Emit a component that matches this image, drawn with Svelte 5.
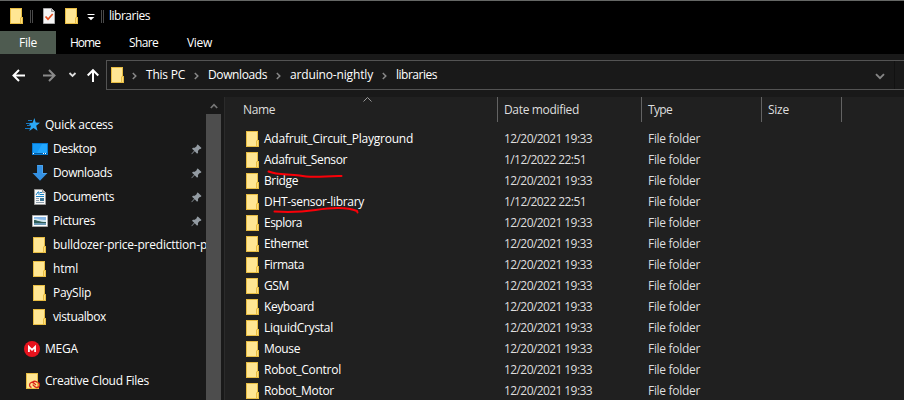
<script>
  // Tightens or loosens the tracking of a label so that it fills the given width.
  function fit(node, width) {
    const natural = node.getBoundingClientRect().width;
    node.style.letterSpacing = `${(width - natural) / node.textContent.length}px`;
  }

  const tabs = [
    { label: 'File', w: 18, active: true },
    { label: 'Home', w: 30 },
    { label: 'Share', w: 29 },
    { label: 'View', w: 25 }
  ];
  const crumbs = [
    { label: 'This PC', w: 39 },
    { label: 'Downloads', w: 59 },
    { label: 'arduino-nightly', w: 83 },
    { label: 'libraries', w: 41 }
  ];
  const places = [
    { label: 'Desktop', icon: 'desktop', w: 43, pin: true },
    { label: 'Downloads', icon: 'download', w: 59, pin: true },
    { label: 'Documents', icon: 'document', w: 61, pin: true },
    { label: 'Pictures', icon: 'picture', w: 42, pin: true },
    { label: 'bulldozer-price-predicttion-p', icon: 'folder', w: 154 },
    { label: 'html', icon: 'folder', w: 25 },
    { label: 'PaySlip', icon: 'folder', w: 38 },
    { label: 'vistualbox', icon: 'folder', w: 53 }
  ];
  const old = '12/20/2021 19:33';
  const recent = '1/12/2022 22:51';
  const files = [
    { name: 'Adafruit_Circuit_Playground', w: 149, date: old },
    { name: 'Adafruit_Sensor', w: 83, date: recent },
    { name: 'Bridge', w: 34, date: old },
    { name: 'DHT-sensor-library', w: 100, date: recent },
    { name: 'Esplora', w: 38, date: old },
    { name: 'Ethernet', w: 44, date: old },
    { name: 'Firmata', w: 40, date: old },
    { name: 'GSM', w: 25, date: old },
    { name: 'Keyboard', w: 50, date: old },
    { name: 'LiquidCrystal', w: 69, date: old },
    { name: 'Mouse', w: 36, date: old },
    { name: 'Robot_Control', w: 77, date: old },
    { name: 'Robot_Motor', w: 70, date: old }
  ];
</script>

{#snippet folder()}
  <svg class="icon" width="16" height="16" viewBox="0 0 16 16">
    <path d="M1 0h12v9h1v7H1z" fill="#e8bd43" />
    <path d="M2 1h10v8l-1 1v5H2z" fill="#ffe693" />
    <path d="M12 10h1v5h-1z" fill="#ffdf7c" />
  </svg>
{/snippet}

{#snippet placeIcon(kind)}
  {#if kind === 'folder'}
    {@render folder()}
  {:else if kind === 'desktop'}
    <svg class="icon" width="16" height="16" viewBox="0 0 16 16">
      <path d="M0 2h16v12H0z" fill="#0879d0" />
      <path d="M1 3h14v9H1z" fill="#1599f5" />
      <path d="M10 3h5v9H5z" fill="#23a8ff" />
      <path d="M1 12h14v1H1z" fill="#075a9c" />
      <path d="M1 12h1v1H1zM11 12h1v1h-1zM13 12h1v1h-1z" fill="#fff" />
    </svg>
  {:else if kind === 'download'}
    <svg class="icon" width="16" height="16" viewBox="0 0 16 16">
      <path d="M5 0h6v8h4.5L8 15.8.5 8H5z" fill="#3491e3" />
      <path d="M5.5.5h5v8h4" fill="none" stroke="#4aa3ed" />
    </svg>
  {:else if kind === 'document'}
    <svg class="icon" width="16" height="16" viewBox="0 0 16 16">
      <path d="M2.5.5h8l3 3v12h-11z" fill="#f7f8f8" stroke="#999" />
      <path d="M10.5.5v3h3" fill="#ccc" stroke="#999" />
      <path d="m4 6 2-3h1v3M8 3.5h2M8 5.5h4M4 7.5h8" fill="none" stroke="#1680c3" />
      <path d="M4 9.5h3M4 11.5h3M4 13.5h8" stroke="#8d9caa" />
      <path d="M8 9h4v3H8z" fill="#3d7594" />
    </svg>
  {:else if kind === 'picture'}
    <svg class="icon" width="16" height="16" viewBox="0 0 16 16">
      <path d="M.5 2.5h15v11H.5z" fill="#fff" stroke="#aaa" />
      <path d="M2 4h12v8H2z" fill="#88b8e8" />
      <path d="M2 6c4-1 5 1 12 1v2H2z" fill="#d4e8ef" />
      <path d="M2 7c3 0 5 2 12 2v1H2z" fill="#315e57" />
      <path d="M2 10h12v2H2z" fill="#6a98b3" />
    </svg>
  {/if}
{/snippet}

<div class="window">
  <header class="titlebar">
    {@render folder()}
    <span class="divider"></span>
    <svg class="check" width="12" height="16" viewBox="0 0 12 16">
      <path d="M.5.5h8l3 3v12H.5z" fill="#f5f5f5" stroke="#aaa" />
      <path d="M8.5.5v3h3" fill="#ccc" stroke="#999" />
      <path d="m2.5 8.5 2.5 2.7L9.7 6" fill="none" stroke="#e64d1d" stroke-width="1.7" />
    </svg>
    <span class="new">{@render folder()}</span>
    <svg class="custom" width="8" height="8" viewBox="0 0 8 8">
      <path d="M.5 1.5h7" stroke="#fff" />
      <path d="M.7 4h6.6L4 7.2z" fill="#fff" />
    </svg>
    <span class="divider second"></span>
    <span class="title"><span use:fit={41}>libraries</span></span>
  </header>

  <nav class="tabs">
    {#each tabs as tab, i}
      <div class="tab t{i}" class:active={tab.active}><span use:fit={tab.w}>{tab.label}</span></div>
    {/each}
  </nav>

  <div class="navbar">
    <svg class="arrows" width="106" height="43" viewBox="0 0 106 43" fill="none">
      <path d="M25 21.5H14M19 16l-5.5 5.5L19 27" stroke="#fff" stroke-width="2" />
      <path d="M43 21.5h11M49 16l5.5 5.5L49 27" stroke="#8a8a8a" stroke-width="2" />
      <path d="m69.5 19 3 3 3-3" stroke="#ddd" stroke-width="1.8" />
      <path d="M93 28V16.5M87.7 21.5l5.3-5.3 5.3 5.3" stroke="#fff" stroke-width="2" />
    </svg>
    <div class="address">
      {@render folder()}
      {#each crumbs as crumb}
        <svg class="chevron" width="5" height="8" viewBox="0 0 5 8"><path d="m.8 1 3 3-3 3" fill="none" stroke="#888" stroke-width="1.5" /></svg>
        <span class="crumb" style:width="{crumb.w}px"><span use:fit={crumb.w}>{crumb.label}</span></span>
      {/each}
      <svg class="history" width="10" height="7" viewBox="0 0 10 7"><path d="m1 1.2 4 4 4-4" fill="none" stroke="#858585" stroke-width="1.9" /></svg>
      <span class="edge"></span>
    </div>
  </div>

  <div class="body">
    <aside>
      <div class="tree">
        <div class="place root quick">
          <svg class="icon" width="16" height="16" viewBox="0 0 16 16">
            <path d="m9.4 1 1.3 4.6 4.3.1-3.8 3 1.3 5-4-2.8-4.2 3 1.6-5L3 6l4.6-.2z" fill="#2ba8f6" />
            <path d="M3 3.5h4M1 6.5h4M2 8.5h4M0 11.5h5" stroke="#1678c0" />
          </svg>
          <span use:fit={68}>Quick access</span>
        </div>
        {#each places as place}
          <div class="place">
            {@render placeIcon(place.icon)}
            <span use:fit={place.w}>{place.label}</span>
            {#if place.pin}
              <svg class="pin" width="11" height="11" viewBox="0 0 11 11">
                <path d="m6.8.5 3.7 3.6-1 1-.8-.2-1.8 2 .2 1.8-1 1-2.4-2.4L.8 10.2l-.4-.4 2.8-3L1 4.7l1-1 1.8.1 2.1-1.9L5.8 1z" fill="#939ba2" />
              </svg>
            {/if}
          </div>
        {/each}
        <div class="place root spaced">
          <svg class="icon mega" width="16" height="16" viewBox="0 0 16 16">
            <circle cx="8" cy="8" r="8" fill="#e7131e" />
            <path d="M4.9 11V5.8L8 8.8l3.1-3V11" fill="none" stroke="#fff" stroke-width="1.7" />
          </svg>
          <span use:fit={33}>MEGA</span>
        </div>
        <div class="place root spaced">
          <svg class="icon" width="16" height="16" viewBox="0 0 16 16">
            <path d="M1 0h12v10h1v6H1z" fill="#e8bd43" />
            <path d="M2 1h10v14H2z" fill="#ffe693" />
            <path d="M6.5 14.5a2.7 2.7 0 0 1 0-5.2c2-.5 3 1.4 4.5 2.8M13 9.3c2.3 1 2 5.5-1.5 5.2-2 0-2.8-2-3.8-3M7.5 9c1.5-1 3.5-1 5 .5" fill="none" stroke="#da2418" stroke-width="1.3" />
          </svg>
          <span use:fit={104}>Creative Cloud Files</span>
        </div>
      </div>
      <div class="scrollbar">
        <div class="up"><svg width="8" height="6" viewBox="0 0 8 6"><path d="m.8 5 3.2-3.3L7.2 5" fill="none" stroke="#777" stroke-width="1.7" /></svg></div>
        <div class="thumb"></div>
      </div>
    </aside>

    <main>
      <div class="row head">
        <div class="name"><span use:fit={32}>Name</span></div>
        <div class="date"><span use:fit={75}>Date modified</span></div>
        <div class="type"><span use:fit={24}>Type</span></div>
        <div class="size"><span use:fit={21}>Size</span></div>
        <svg class="sort" width="9" height="5" viewBox="0 0 9 5"><path d="m.5 4.5 4-4 4 4" fill="none" stroke="#999" /></svg>
      </div>
      <div class="files">
        {#each files as file}
          <div class="row">
            <div class="name">{@render folder()}<span use:fit={file.w}>{file.name}</span></div>
            <div class="date"><span use:fit={file.date === old ? 88 : 82}>{file.date}</span></div>
            <div class="type"><span use:fit={52}>File folder</span></div>
          </div>
        {/each}
      </div>
      <svg class="marks" width="100" height="54" viewBox="0 0 100 54" fill="none">
        <path d="M4.5 6.5c10 4 20 2 31 4 14 3 27 0 42 .5" stroke="#fa0008" stroke-width="2" stroke-linecap="round" />
        <path d="M10.5 46.5c14 .8 29 .2 41-1.5 13-2 31-3.5 41.5 1l.5 1.5" stroke="#fa0008" stroke-width="2" stroke-linecap="round" />
      </svg>
    </main>
  </div>
</div>

<style>
  .window {
    width: 904px;
    height: 400px;
    overflow: hidden;
    display: flex;
    flex-direction: column;
    background: #191919;
    color: #fff;
    font: 12px/16px 'Open Sans', 'Noto Sans', sans-serif;
    white-space: nowrap;
  }
  svg { display: block; flex: none; }
  .titlebar {
    box-sizing: border-box;
    height: 31px;
    flex: none;
    display: flex;
    align-items: center;
    padding-left: 9px;
    background: #000;
    border-top: 1px solid #656765;
  }
  .divider { width: 1px; height: 13px; margin-left: 5px; border: 1px solid #4a4a4a; border-width: 0 1px; }
  .check { margin-left: 10px; }
  .new { margin-left: 9px; }
  .custom { margin-left: 7px; margin-top: 2px; }
  .second { margin-left: 6px; }
  .title { margin-left: 5px; }
  .tabs { height: 23px; flex: none; display: flex; background: #000; }
  .tab { box-sizing: border-box; display: flex; align-items: center; padding-top: 1px; }
  .t0 { width: 56px; padding-left: 19px; }
  .t1 { width: 58px; padding-left: 14px; }
  .t2 { width: 59px; padding-left: 15px; }
  .t3 { width: 53px; padding-left: 14px; }
  .active { background: #4e5b50; }
  .navbar { height: 43px; flex: none; display: flex; }
  .address {
    box-sizing: border-box;
    flex: 1;
    height: 30px;
    margin-top: 6px;
    padding-left: 3px;
    display: flex;
    align-items: center;
    border: 1px solid #535353;
    border-right: 0;
  }
  .chevron { margin: 1px 9px 0 9px; }
  .address > .icon + .chevron { margin-left: 6px; margin-right: 9px; }
  .crumb { flex: none; }
  .history { margin: 2px 9px 0 auto; }
  .edge { width: 1px; height: 28px; margin-right: 9px; background: #111; }
  .body { flex: 1; min-height: 0; display: flex; }
  aside { box-sizing: border-box; width: 225px; display: flex; flex: none; background: #191919; border-right: 1px solid #2b2b2b; }
  .tree { width: 206px; padding-top: 16px; overflow: hidden; }
  .place { box-sizing: border-box; height: 24px; padding-left: 32px; display: flex; align-items: center; gap: 5px; }
  .row span { padding-top: 1px; }
  .root { padding-left: 25px; gap: 4px; }
  .spaced { margin-top: 8px; }
  .mega { margin-left: -1px; margin-right: 1px; }
  .pin { margin-left: auto; margin-right: 4px; }
  .scrollbar { width: 15px; display: flex; flex-direction: column; }
  .up { height: 17px; display: flex; align-items: center; justify-content: center; }
  .thumb { flex: 1; background: #4d4d4d; }
  main { flex: 1; position: relative; background: #202020; overflow: hidden; }
  .row { height: 21px; display: flex; align-items: center; }
  .row > div { box-sizing: border-box; display: flex; align-items: center; }
  .name { width: 273px; padding-left: 20px; gap: 3px; }
  .date { width: 144px; padding-left: 6px; color: #dedede; }
  .type { width: 120px; padding-left: 6px; color: #dedede; }
  .size { width: 80px; padding-left: 6px; }
  .head { height: 25px; color: #dedede; }
  .head > div { height: 25px; border-right: 1px solid #636363; }
  .head .name { padding-left: 18px; }
  .files { padding-top: 6px; }
  .sort { position: absolute; left: 138px; top: 0; }
  .marks { position: absolute; left: 39px; top: 68px; }
</style>
